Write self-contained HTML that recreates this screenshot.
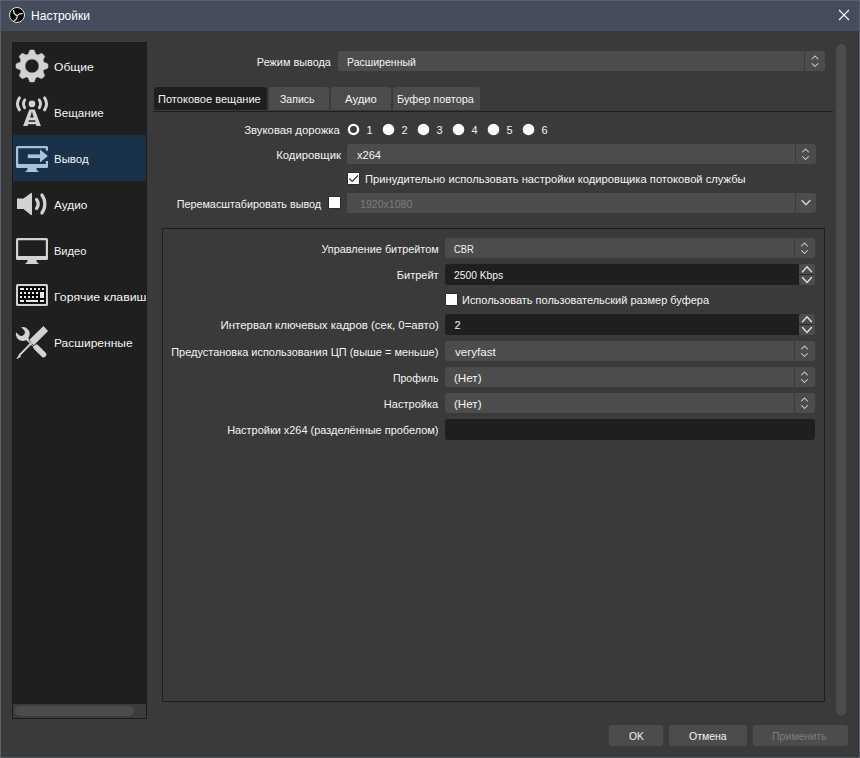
<!DOCTYPE html>
<html><head><meta charset="utf-8"><style>
html,body{margin:0;padding:0;}
body{width:860px;height:758px;position:relative;overflow:hidden;background:#3a3a3a;font-family:"Liberation Sans",sans-serif;}
body>div{position:absolute;box-sizing:content-box;}
.t{position:absolute;white-space:nowrap;line-height:14px;display:block;}
</style></head><body>
<div style="left:0px;top:0px;width:860px;height:758px;background:#5a6170;"></div><div style="left:1px;top:1px;width:858px;height:30px;background:#454c5c;"></div><div style="left:1px;top:31px;width:858px;height:726px;background:#353535;"></div><div style="left:1px;top:31px;width:857px;height:725px;background:#3a3a3a;"></div><div style="left:12px;top:42px;width:135px;height:677px;background:#1b1b1b;"></div><div style="left:13px;top:43px;width:133px;height:661px;background:#1f1f1f;"></div><div style="left:13px;top:704px;width:133px;height:14px;background:#3c3c3c;"></div><div style="left:15px;top:706px;width:119px;height:10px;background:#4c4c4c;border-radius:5px;"></div><div style="left:13px;top:135px;width:133px;height:46px;background:#1a3249;"></div><div style="left:338px;top:51px;width:487px;height:20px;background:#4c4c4c;border-radius:3px;"></div><div style="left:804px;top:51px;width:1px;height:20px;background:#3a3a3a;"></div><div style="left:347px;top:144px;width:469px;height:20px;background:#4c4c4c;border-radius:3px;"></div><div style="left:795px;top:144px;width:1px;height:20px;background:#3a3a3a;"></div><div style="left:347px;top:193px;width:469px;height:20px;background:#4c4c4c;border-radius:0 3px 3px 0;"></div><div style="left:795px;top:193px;width:1px;height:20px;background:#3a3a3a;"></div><div style="left:154px;top:87px;width:113px;height:23px;background:#1f1f1f;border-radius:3px 3px 0 0;"></div><div style="left:269px;top:87px;width:60px;height:23px;background:#4c4c4c;border-radius:3px 3px 0 0;"></div><div style="left:331px;top:87px;width:60px;height:23px;background:#4c4c4c;border-radius:3px 3px 0 0;"></div><div style="left:393px;top:87px;width:87px;height:23px;background:#4c4c4c;border-radius:3px 3px 0 0;"></div><div style="left:153px;top:111px;width:680px;height:1px;background:#1f1f1f;"></div><div style="left:162px;top:228px;width:661px;height:472px;border:1px solid #1f1f1f;"></div><div style="left:445px;top:238px;width:370px;height:20px;background:#4c4c4c;border-radius:3px;"></div><div style="left:794px;top:238px;width:1px;height:20px;background:#3a3a3a;"></div><div style="left:445px;top:264px;width:354px;height:21px;background:#1f1f1f;border-radius:3px 0 0 3px;"></div><div style="left:799px;top:264px;width:16px;height:10px;background:#4c4c4c;border-radius:3px 3px 0 0;"></div><div style="left:799px;top:275px;width:16px;height:10px;background:#4c4c4c;border-radius:0 0 3px 3px;"></div><div style="left:799px;top:274px;width:14px;height:1px;background:#262626;"></div><div style="left:445px;top:314px;width:354px;height:21px;background:#1f1f1f;border-radius:3px 0 0 3px;"></div><div style="left:799px;top:314px;width:16px;height:10px;background:#4c4c4c;border-radius:3px 3px 0 0;"></div><div style="left:799px;top:325px;width:16px;height:10px;background:#4c4c4c;border-radius:0 0 3px 3px;"></div><div style="left:799px;top:324px;width:14px;height:1px;background:#262626;"></div><div style="left:445px;top:341px;width:370px;height:20px;background:#4c4c4c;border-radius:3px;"></div><div style="left:794px;top:341px;width:1px;height:20px;background:#3a3a3a;"></div><div style="left:445px;top:367px;width:370px;height:20px;background:#4c4c4c;border-radius:3px;"></div><div style="left:794px;top:367px;width:1px;height:20px;background:#3a3a3a;"></div><div style="left:445px;top:393px;width:370px;height:20px;background:#4c4c4c;border-radius:3px;"></div><div style="left:794px;top:393px;width:1px;height:20px;background:#3a3a3a;"></div><div style="left:445px;top:419px;width:370px;height:21px;background:#1f1f1f;border-radius:3px;"></div><div style="left:609px;top:725px;width:54px;height:21px;background:#4c4c4c;border-radius:3px;"></div><div style="left:669px;top:725px;width:78px;height:21px;background:#4c4c4c;border-radius:3px;"></div><div style="left:753px;top:725px;width:95px;height:21px;background:#4c4c4c;border-radius:3px;"></div><div style="left:836px;top:44px;width:10px;height:672px;background:#4c4c4c;border-radius:5px;"></div><div style="left:347px;top:172px;width:11px;height:11px;background:#fff;border:1px solid #2c2c2c;border-radius:1px"></div><div style="left:328px;top:196px;width:11px;height:11px;background:#fff;border:1px solid #2c2c2c;border-radius:1px"></div><div style="left:445px;top:293px;width:11px;height:11px;background:#fff;border:1px solid #2c2c2c;border-radius:1px"></div><span class="t" style="left:30.50px;top:9px;font-size:12px;color:#ffffff;transform:scaleX(1.0027);transform-origin:left center;">Настройки</span><span class="t" style="left:54.40px;top:60px;font-size:11px;color:#f4f4f4;transform:scaleX(1.1004);transform-origin:left center;">Общие</span><span class="t" style="left:54.40px;top:106px;font-size:11px;color:#f4f4f4;transform:scaleX(1.0562);transform-origin:left center;">Вещание</span><span class="t" style="left:54.40px;top:152px;font-size:11px;color:#f4f4f4;transform:scaleX(1.0404);transform-origin:left center;">Вывод</span><span class="t" style="left:54.40px;top:198px;font-size:11px;color:#f4f4f4;transform:scaleX(1.0764);transform-origin:left center;">Аудио</span><span class="t" style="left:54.40px;top:244px;font-size:11px;color:#f4f4f4;transform:scaleX(1.0051);transform-origin:left center;">Видео</span><span class="t" style="left:54.40px;top:290px;font-size:11px;color:#f4f4f4;transform:scaleX(1.1195);transform-origin:left center;">Горячие клавиш</span><span class="t" style="left:54.40px;top:336px;font-size:11px;color:#f4f4f4;transform:scaleX(1.0922);transform-origin:left center;">Расширенные</span><span class="t" style="left:256.15px;top:55px;font-size:11px;color:#f4f4f4;transform:scaleX(0.9886);transform-origin:right center;">Режим вывода</span><span class="t" style="left:347.40px;top:55px;font-size:11px;color:#f4f4f4;transform:scaleX(0.9570);transform-origin:left center;">Расширенный</span><span class="t" style="left:158.30px;top:92px;font-size:11px;color:#f4f4f4;transform:scaleX(1.0047);transform-origin:left center;">Потоковое вещание</span><span class="t" style="left:280.40px;top:92px;font-size:11px;color:#f4f4f4;transform:scaleX(0.9586);transform-origin:left center;">Запись</span><span class="t" style="left:344.70px;top:92px;font-size:11px;color:#f4f4f4;transform:scaleX(1.0249);transform-origin:left center;">Аудио</span><span class="t" style="left:397.40px;top:92px;font-size:11px;color:#f4f4f4;transform:scaleX(0.9892);transform-origin:left center;">Буфер повтора</span><span class="t" style="left:247.17px;top:123px;font-size:11px;color:#f4f4f4;transform:scaleX(1.0299);transform-origin:right center;">Звуковая дорожка</span><span class="t" style="left:366.50px;top:123px;font-size:11px;color:#f4f4f4;">1</span><span class="t" style="left:401.50px;top:123px;font-size:11px;color:#f4f4f4;">2</span><span class="t" style="left:436.50px;top:123px;font-size:11px;color:#f4f4f4;">3</span><span class="t" style="left:471.50px;top:123px;font-size:11px;color:#f4f4f4;">4</span><span class="t" style="left:506.50px;top:123px;font-size:11px;color:#f4f4f4;">5</span><span class="t" style="left:541.50px;top:123px;font-size:11px;color:#f4f4f4;">6</span><span class="t" style="left:277.57px;top:148px;font-size:11px;color:#f4f4f4;transform:scaleX(1.0281);transform-origin:right center;">Кодировщик</span><span class="t" style="left:357.00px;top:148px;font-size:11px;color:#f4f4f4;transform:scaleX(1.0062);transform-origin:left center;">x264</span><span class="t" style="left:364.80px;top:172px;font-size:11px;color:#f4f4f4;transform:scaleX(1.0169);transform-origin:left center;">Принудительно использовать настройки кодировщика потоковой службы</span><span class="t" style="left:174.34px;top:197px;font-size:11px;color:#f4f4f4;transform:scaleX(0.9819);transform-origin:right center;">Перемасштабировать вывод</span><span class="t" style="left:359.80px;top:197px;font-size:11px;color:#7d7d7d;transform:scaleX(0.9607);transform-origin:left center;">1920x1080</span><span class="t" style="left:319.94px;top:242px;font-size:11px;color:#f4f4f4;transform:scaleX(0.9877);transform-origin:right center;">Управление битрейтом</span><span class="t" style="left:454.40px;top:242px;font-size:11px;color:#f4f4f4;transform:scaleX(0.8439);transform-origin:left center;">CBR</span><span class="t" style="left:396.78px;top:268px;font-size:11px;color:#f4f4f4;">Битрейт</span><span class="t" style="left:454.00px;top:268px;font-size:11px;color:#f4f4f4;transform:scaleX(0.9354);transform-origin:left center;">2500 Kbps</span><span class="t" style="left:462.20px;top:293px;font-size:11px;color:#f4f4f4;transform:scaleX(0.9968);transform-origin:left center;">Использовать пользовательский размер буфера</span><span class="t" style="left:228.75px;top:318px;font-size:11px;color:#f4f4f4;transform:scaleX(1.0403);transform-origin:right center;">Интервал ключевых кадров (сек, 0=авто)</span><span class="t" style="left:454.50px;top:318px;font-size:11px;color:#f4f4f4;">2</span><span class="t" style="left:170.29px;top:345px;font-size:11px;color:#f4f4f4;transform:scaleX(0.9955);transform-origin:right center;">Предустановка использования ЦП (выше = меньше)</span><span class="t" style="left:454.70px;top:345px;font-size:11px;color:#f4f4f4;transform:scaleX(1.0568);transform-origin:left center;">veryfast</span><span class="t" style="left:391.11px;top:371px;font-size:11px;color:#f4f4f4;transform:scaleX(0.9603);transform-origin:right center;">Профиль</span><span class="t" style="left:454.00px;top:371px;font-size:11px;color:#f4f4f4;transform:scaleX(1.0552);transform-origin:left center;">(Нет)</span><span class="t" style="left:384.45px;top:397px;font-size:11px;color:#f4f4f4;transform:scaleX(1.0027);transform-origin:right center;">Настройка</span><span class="t" style="left:454.00px;top:397px;font-size:11px;color:#f4f4f4;transform:scaleX(1.0552);transform-origin:left center;">(Нет)</span><span class="t" style="left:226.18px;top:423px;font-size:11px;color:#f4f4f4;transform:scaleX(0.9947);transform-origin:right center;">Настройки x264 (разделённые пробелом)</span><span class="t" style="left:628.50px;top:729px;font-size:11px;color:#f4f4f4;transform:scaleX(0.9312);transform-origin:left center;">OK</span><span class="t" style="left:688.60px;top:729px;font-size:11px;color:#f4f4f4;transform:scaleX(0.9552);transform-origin:left center;">Отмена</span><span class="t" style="left:772.30px;top:729px;font-size:11px;color:#7d7d7d;transform:scaleX(0.9624);transform-origin:left center;">Применить</span><div style="left:146px;top:280px;width:1px;height:30px;background:#1b1b1b;"></div><div style="left:147px;top:280px;width:13px;height:30px;background:#3a3a3a;"></div>
<svg width="860" height="758" viewBox="0 0 860 758" style="position:absolute;left:0;top:0"><circle cx="17" cy="15" r="7.5" fill="#000" stroke="#e6e6e6" stroke-width="1"/><path d="M17.2 15.6 Q13.8 14.4 13.4 10.4 M17.2 15.6 Q19.4 13.2 22.2 13.8 M17.2 15.6 Q17.4 19.2 14.2 20.8" fill="none" stroke="#dcdcdc" stroke-width="1.3" stroke-linecap="round"/><path d="M839 10 L849 20 M849 10 L839 20" stroke="#fff" stroke-width="1.1"/><path d="M34.10 50.04 L29.90 50.04 L28.44 53.60 Q27.64 55.47 25.75 54.72 L22.20 53.23 L19.23 56.20 L20.72 59.75 Q21.47 61.64 19.60 62.44 L16.04 63.90 L16.04 68.10 L19.60 69.56 Q21.47 70.36 20.72 72.25 L19.23 75.80 L22.20 78.77 L25.75 77.28 Q27.64 76.53 28.44 78.40 L29.90 81.96 L34.10 81.96 L35.56 78.40 Q36.36 76.53 38.25 77.28 L41.80 78.77 L44.77 75.80 L43.28 72.25 Q42.53 70.36 44.40 69.56 L47.96 68.10 L47.96 63.90 L44.40 62.44 Q42.53 61.64 43.28 59.75 L44.77 56.20 L41.80 53.23 L38.25 54.72 Q36.36 55.47 35.56 53.60 Z M39.0 66 A7.0 7.0 0 1 0 25.0 66 A7.0 7.0 0 1 0 39.0 66 Z" fill="#d2d2d2" fill-rule="evenodd" stroke="#d2d2d2" stroke-width="0.5" stroke-linejoin="round"/><circle cx="32" cy="103.9" r="3.3" fill="#d2d2d2"/><path d="M24.69 99.99 A7.6 7.6 0 0 0 24.69 107.81" fill="none" stroke="#d2d2d2" stroke-width="2.9" stroke-linecap="round"/><path d="M39.31 107.81 A7.6 7.6 0 0 0 39.31 99.99" fill="none" stroke="#d2d2d2" stroke-width="2.9" stroke-linecap="round"/><path d="M19.43 97.92 A10.7 10.7 0 0 0 19.43 109.88" fill="none" stroke="#d2d2d2" stroke-width="3.0" stroke-linecap="round"/><path d="M44.57 109.88 A10.7 10.7 0 0 0 44.57 97.92" fill="none" stroke="#d2d2d2" stroke-width="3.0" stroke-linecap="round"/><path d="M29.3 109.5 L34.7 109.5 L40.9 126 L36.5 126 L35.9 124.3 L28.1 124.3 L27.5 126 L23.1 126 Z M31.95 111.6 L33.6 117.6 L30.3 117.6 Z M29 120.2 L35 120.2 L35.6 121.8 L28.4 121.8 Z" fill="#d2d2d2" fill-rule="evenodd"/><path d="M17.5 146 H46.5 Q48 146 48 147.5 V166.5 Q48 168 46.5 168 H17.5 Q16 168 16 166.5 V147.5 Q16 146 17.5 146 Z M18.2 148.2 V164 H45.8 V148.2 Z" fill="#a9c1d9" fill-rule="evenodd"/><path d="M27.6 168 H36.4 Q36.6 171 39.6 172 H24.4 Q27.4 171 27.6 168 Z" fill="#a9c1d9"/><rect x="45" y="150.7" width="4" height="10.3" fill="#1a3249"/><rect x="27.8" y="154.4" width="12.7" height="3.7" fill="#a9c1d9"/><path d="M40 149.6 L47.9 156.1 L40 162.5 Z" fill="#a9c1d9"/><path d="M17 198.5 H23.5 L31 193 H32 V215 H31 L23.5 209 H17 Z" fill="#d2d2d2"/><path d="M41.88 212.99 A15.3 15.3 0 0 0 41.88 195.01" fill="none" stroke="#d2d2d2" stroke-width="3.3" stroke-linecap="round"/><path d="M36.57 208.41 A7.5 7.5 0 0 0 36.57 199.59" fill="none" stroke="#d2d2d2" stroke-width="3.3" stroke-linecap="round"/><path d="M17.5 238 H46.5 Q48 238 48 239.5 V258.5 Q48 260 46.5 260 H17.5 Q16 260 16 258.5 V239.5 Q16 238 17.5 238 Z M18.2 240.2 V256 H45.8 V240.2 Z" fill="#d2d2d2" fill-rule="evenodd"/><path d="M27.6 260 H36.4 Q36.6 263 39.6 264 H24.4 Q27.4 263 27.6 260 Z" fill="#d2d2d2"/><path d="M17.5 284 H46.5 Q48 284 48 285.5 V304.5 Q48 306 46.5 306 H17.5 Q16 306 16 304.5 V285.5 Q16 284 17.5 284 Z M18.2 286.2 V303.8 H45.8 V286.2 Z" fill="#d2d2d2" fill-rule="evenodd"/><rect x="18.2" y="286.2" width="27.6" height="17.6" fill="#050505"/><rect x="20" y="288" width="4" height="2" fill="#e8e8e8"/><rect x="26" y="288" width="2" height="2" fill="#e8e8e8"/><rect x="30" y="288" width="2" height="2" fill="#e8e8e8"/><rect x="34" y="288" width="2" height="2" fill="#e8e8e8"/><rect x="38" y="288" width="2" height="2" fill="#e8e8e8"/><rect x="42" y="288" width="2" height="2" fill="#e8e8e8"/><rect x="20" y="292" width="2" height="2" fill="#e8e8e8"/><rect x="24" y="292" width="2" height="2" fill="#e8e8e8"/><rect x="28" y="292" width="2" height="2" fill="#e8e8e8"/><rect x="32" y="292" width="2" height="2" fill="#e8e8e8"/><rect x="36" y="292" width="2" height="2" fill="#e8e8e8"/><rect x="20" y="296" width="2" height="2" fill="#e8e8e8"/><rect x="24" y="296" width="2" height="2" fill="#e8e8e8"/><rect x="28" y="296" width="2" height="2" fill="#e8e8e8"/><rect x="32" y="296" width="2" height="2" fill="#e8e8e8"/><rect x="36" y="296" width="2" height="2" fill="#e8e8e8"/><rect x="40" y="292" width="4" height="6" fill="#e8e8e8"/><rect x="20" y="300" width="4" height="2" fill="#e8e8e8"/><rect x="26" y="300" width="12" height="2" fill="#e8e8e8"/><rect x="40" y="300" width="4" height="2" fill="#e8e8e8"/><path d="M21.2 327.2 A7 7 0 1 1 16 332.2 L19.2 335.2 A3.6 3.6 0 0 0 24.2 330.2 Z" fill="#d2d2d2"/><path d="M26 338 L43.5 354.5" stroke="#d2d2d2" stroke-width="3" /><path d="M36.2 347.2 L43.5 354.5" stroke="#d2d2d2" stroke-width="5.6" stroke-linecap="round"/><path d="M43.4 326.2 L47.9 331 L33.6 345.2 L29.4 340 Z" fill="#d2d2d2" stroke="#1f1f1f" stroke-width="1.6" stroke-linejoin="round" paint-order="stroke"/><path d="M43.4 326.2 L47.9 331 L33.6 345.2 L29.4 340 Z" fill="#d2d2d2"/><path d="M31.5 343 L19 355.6" stroke="#d2d2d2" stroke-width="2"/><path d="M19.5 355 L17 358.5 L20.5 356.5 Z" fill="#d2d2d2" stroke="#d2d2d2" stroke-width="1"/><circle cx="353.5" cy="129.5" r="4.6" fill="none" stroke="#fff" stroke-width="2.4"/><circle cx="388.5" cy="129.5" r="5.8" fill="#fff"/><circle cx="423.5" cy="129.5" r="5.8" fill="#fff"/><circle cx="458.5" cy="129.5" r="5.8" fill="#fff"/><circle cx="493.5" cy="129.5" r="5.8" fill="#fff"/><circle cx="528.5" cy="129.5" r="5.8" fill="#fff"/><path d="M349.2 178.5 L352.2 181.5 L358 175.5" fill="none" stroke="#3a3a3a" stroke-width="1.2"/><path d="M812 59 L815 56 L818 59 M812 63.5 L815 66.5 L818 63.5" fill="none" stroke="#d4d4d4" stroke-width="1.05" stroke-linecap="round" stroke-linejoin="round"/><path d="M802.5 152 L805.5 149 L808.5 152 M802.5 156.5 L805.5 159.5 L808.5 156.5" fill="none" stroke="#d4d4d4" stroke-width="1.05" stroke-linecap="round" stroke-linejoin="round"/><path d="M801.5 246 L804.5 243 L807.5 246 M801.5 250.5 L804.5 253.5 L807.5 250.5" fill="none" stroke="#d4d4d4" stroke-width="1.05" stroke-linecap="round" stroke-linejoin="round"/><path d="M801.5 349 L804.5 346 L807.5 349 M801.5 353.5 L804.5 356.5 L807.5 353.5" fill="none" stroke="#d4d4d4" stroke-width="1.05" stroke-linecap="round" stroke-linejoin="round"/><path d="M801.5 375 L804.5 372 L807.5 375 M801.5 379.5 L804.5 382.5 L807.5 379.5" fill="none" stroke="#d4d4d4" stroke-width="1.05" stroke-linecap="round" stroke-linejoin="round"/><path d="M801.5 401 L804.5 398 L807.5 401 M801.5 405.5 L804.5 408.5 L807.5 405.5" fill="none" stroke="#d4d4d4" stroke-width="1.05" stroke-linecap="round" stroke-linejoin="round"/><path d="M802 200.5 L806 204.8 L810 200.5" fill="none" stroke="#d8d8d8" stroke-width="1.3" stroke-linecap="round"/><path d="M802.5 271.8 L807 266.8 L811.5 271.8 M802.5 277.5 L807 282.5 L811.5 277.5" fill="none" stroke="#e0e0e0" stroke-width="1.4" stroke-linecap="round"/><path d="M802.5 321.8 L807 316.8 L811.5 321.8 M802.5 327.5 L807 332.5 L811.5 327.5" fill="none" stroke="#e0e0e0" stroke-width="1.4" stroke-linecap="round"/></svg>
</body></html>
